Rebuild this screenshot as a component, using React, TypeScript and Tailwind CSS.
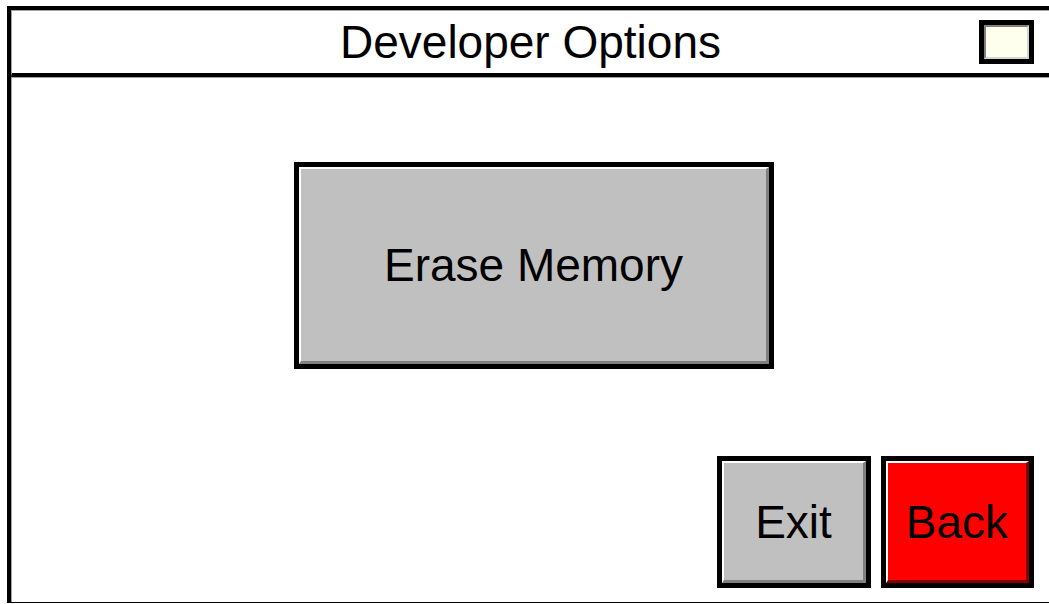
import React from "react";

const font = { fontFamily: '"Liberation Sans", Arial, sans-serif' };

function BevelButton({
  label,
  tone = "grey",
  className = "",
}: {
  label: string;
  tone?: "grey" | "red";
  className?: string;
}) {
  const face =
    tone === "red"
      ? "bg-[#ff0000] border-b-[#800000] border-r-[#800000]"
      : "bg-[#c0c0c0] border-b-[#808080] border-r-[#808080]";

  return (
    <button className={`border-[5px] border-black p-0 ${className}`}>
      <div
        className={`flex h-full w-full items-center justify-center border-l-2 border-t-2 border-b-[3px] border-r-[3px] border-l-white border-t-white text-[46px] leading-none text-black ${face}`}
      >
        {label}
      </div>
    </button>
  );
}

export default function App() {
  return (
    <div className="h-[604px] w-[1049px] overflow-hidden bg-white pl-[7px] pt-[6px]" style={font}>
      <div className="flex h-[597px] flex-col border-b border-l-4 border-t-4 border-black">
        {/* title bar */}
        <header className="grid h-[67px] shrink-0 grid-cols-[1fr_auto_1fr] items-center border-b-4 border-black border-l border-t border-l-[#a0a0a0] border-t-[#a0a0a0]">
          <div />
          <h1 className="text-[46px] leading-none text-black">Developer Options</h1>
          <div className="flex justify-end pr-[15px]">
            <div className="h-[44px] w-[55px] border-[5px] border-black">
              <div className="h-full w-full border-2 border-l-[#808080] border-t-[#808080] border-b-[#d4d4d4] border-r-[#d4d4d4] bg-[#ffffee]" />
            </div>
          </div>
        </header>

        {/* body */}
        <main className="flex flex-1 flex-col border-l border-t border-l-[#a0a0a0] border-t-[#a0a0a0]">
          <BevelButton label="Erase Memory" className="ml-[282px] mt-[84px] h-[207px] w-[480px] self-start" />
          <div className="mt-auto flex justify-end gap-[10px] pb-[14px] pr-[15px]">
            <BevelButton label="Exit" className="h-[132px] w-[154px]" />
            <BevelButton label="Back" tone="red" className="h-[132px] w-[153px]" />
          </div>
        </main>
      </div>
    </div>
  );
}
